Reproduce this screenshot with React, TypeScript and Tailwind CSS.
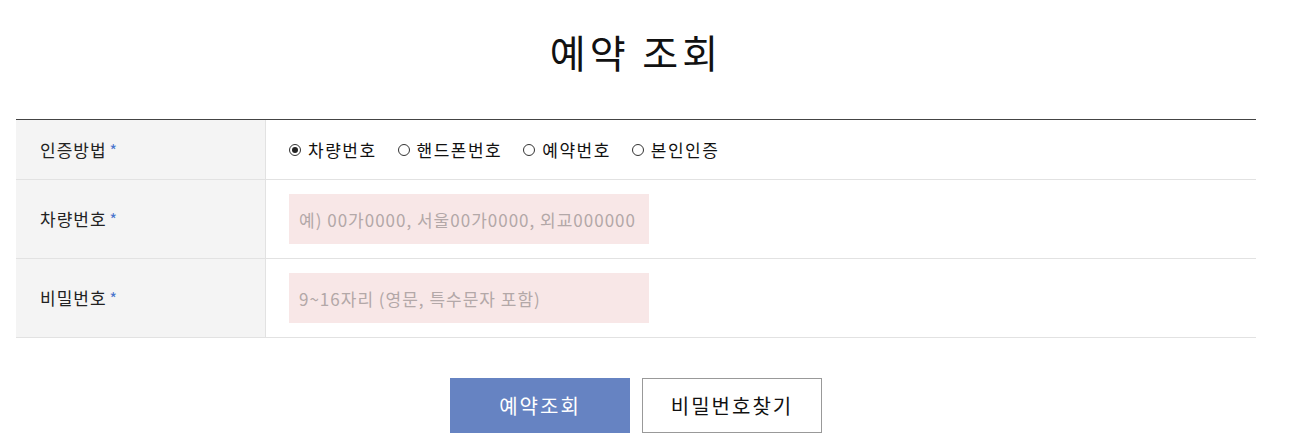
import React, { useState } from "react";

const font = { fontFamily: '"Noto Sans CJK KR", "Noto Sans", sans-serif' };

const methods = ["차량번호", "핸드폰번호", "예약번호", "본인인증"];

const Label = ({ text }: { text: string }) => (
  <div className="w-[250px] shrink-0 bg-[#f4f4f4] border-r border-[#e2e2e2] flex items-center pl-6 text-[17px] tracking-[1px] text-[#222]">
    {text}
    <span className="ml-[3px] text-[16px] text-[#4a74cc]">*</span>
  </div>
);

export default function App() {
  const [method, setMethod] = useState("차량번호");

  return (
    <div className="bg-white w-[1293px] h-[446px] text-[#111]" style={font}>
      <div className="ml-4 w-[1240px]">
        {/* Title */}
        <h1 className="pt-[29px] pb-[45px] text-center text-[39px] leading-[45px] font-normal tracking-[4px]">
          예약 조회
        </h1>

        {/* Form table */}
        <div className="border-t border-[#444]">
          <div className="flex h-[60px] border-b border-[#e2e2e2]">
            <Label text="인증방법" />
            <div className="flex items-center pl-[23px] gap-[21px] text-[17px] tracking-[1.5px]">
              {methods.map((m) => (
                <label
                  key={m}
                  onClick={() => setMethod(m)}
                  className="flex items-center gap-[7px] cursor-pointer"
                >
                  <span className="w-[12px] h-[12px] rounded-full border border-[#333] flex items-center justify-center">
                    {method === m && (
                      <span className="w-[6px] h-[6px] rounded-full bg-[#222]" />
                    )}
                  </span>
                  {m}
                </label>
              ))}
            </div>
          </div>

          <div className="flex h-[79px] border-b border-[#e2e2e2]">
            <Label text="차량번호" />
            <div className="flex items-center pl-[23px]">
              <input
                className="w-[360px] h-[50px] bg-[#f8e7e7] px-[10px] text-[17px] tracking-[1px] outline-none placeholder:text-[#b3a8a8]"
                placeholder="예) 00가0000, 서울00가0000, 외교000000"
              />
            </div>
          </div>

          <div className="flex h-[79px] border-b border-[#e2e2e2]">
            <Label text="비밀번호" />
            <div className="flex items-center pl-[23px]">
              <input
                type="text"
                className="w-[360px] h-[50px] bg-[#f8e7e7] px-[10px] text-[17px] tracking-[1px] outline-none placeholder:text-[#b3a8a8]"
                placeholder="9~16자리 (영문, 특수문자 포함)"
              />
            </div>
          </div>
        </div>

        {/* Buttons */}
        <div className="flex justify-center gap-3 mt-10">
          <button className="w-[180px] h-[55px] bg-[#6683c2] text-white text-[20px] tracking-[2px]">
            예약조회
          </button>
          <button className="w-[180px] h-[55px] bg-white border border-[#999] text-[#111] text-[20px] tracking-[2px]">
            비밀번호찾기
          </button>
        </div>
      </div>
    </div>
  );
}
